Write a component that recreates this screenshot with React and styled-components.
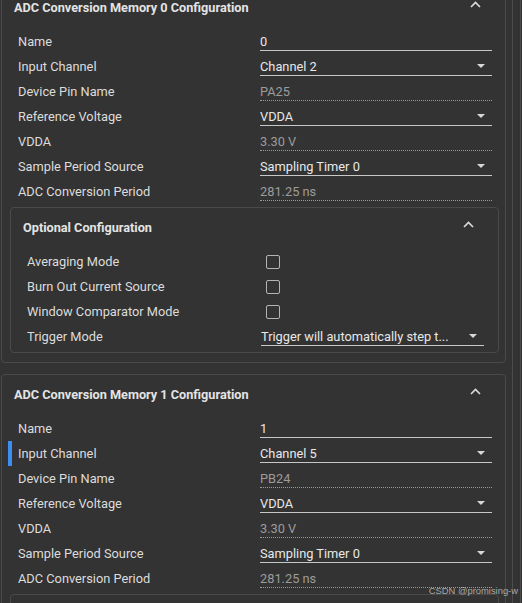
import React from "react";
import styled, { createGlobalStyle } from "styled-components";

const Global = createGlobalStyle`
  html, body { margin: 0; padding: 0; background: #333333; overflow: hidden; }
  body { font-family: Roboto, "Liberation Sans", Arial, sans-serif; }
  * { box-sizing: border-box; }
`;

const Page = styled.div`
  display: flex;
  width: 522px;
  height: 603px;
  position: relative;
  overflow: hidden;
`;

const Main = styled.div`
  width: 512px;
  padding-left: 1px;
  display: flex;
  flex-direction: column;
  gap: 11px;
  margin-top: -13px;
`;

const Rail = styled.div`
  width: 9px;
  height: 100%;
  border-left: 1px solid #4c4c4c;
  border-right: 1px solid #4c4c4c;
`;

const Card = styled.section`
  width: ${(p) => (p.$inner ? "489px" : "505px")};
  border: 1px solid #4a4a4a;
  border-radius: 4px;
  margin: ${(p) => (p.$inner ? "3px 0 9px 8px" : "0")};
  padding-bottom: ${(p) => (p.$inner ? "3px" : "0")};
  flex-shrink: 0;
`;

const Header = styled.div`
  height: 41px;
  display: flex;
  align-items: flex-start;
  justify-content: space-between;
  padding: 12px 24px 0 12px;
`;

const Title = styled.h2`
  margin: 0;
  font-size: 12.7px;
  line-height: 15px;
  font-weight: 700;
  color: #e4e4e4;
`;

const Chevron = styled.svg`
  width: 11px;
  height: 7px;
  margin-top: 1px;
`;

const Row = styled.div`
  position: relative;
  height: 25px;
  display: grid;
  grid-template-columns: 1fr ${(p) => (p.$inner ? "223px" : "232px")};
  align-items: center;
  padding: ${(p) => (p.$inner ? "0 14px 0 16px" : "0 13px 0 16px")};
`;

const Marker = styled.span`
  position: absolute;
  left: 6px;
  top: 0;
  width: 4px;
  height: 25px;
  background: #3d8ef2;
`;

const Label = styled.span`
  font-size: 12.8px;
  line-height: 15px;
  color: #dcdcdc;
  white-space: nowrap;
`;

const Field = styled.div`
  height: 17px;
  margin-top: 1px;
  display: flex;
  align-items: center;
  justify-content: space-between;
  border-bottom: 1px ${(p) => (p.$readonly ? "dotted #9a9a9a" : "solid #c8c8c8")};
  font-size: 12.8px;
  line-height: 15px;
  color: ${(p) => (p.$readonly ? "#9c9c9c" : "#e8e8e8")};
  padding-right: 7px;
  white-space: nowrap;
  overflow: hidden;
`;

const Arrow = styled.span`
  width: 0;
  height: 0;
  border-left: 4px solid transparent;
  border-right: 4px solid transparent;
  border-top: 4px solid #d8d8d8;
  flex-shrink: 0;
  margin-top: -1px;
`;

const Check = styled.span`
  width: 14px;
  height: 14px;
  margin-left: 5px;
  border: 1.5px solid #b4b4b4;
  border-radius: 2px;
`;

const Watermark = styled.div`
  position: absolute;
  right: 4px;
  bottom: 7px;
  font-size: 9.4px;
  color: rgba(210, 210, 210, 0.75);
  font-family: "Liberation Sans", Arial, sans-serif;
`;

const ChevronUp = () => (
  <Chevron viewBox="0 0 11 7">
    <path d="M1 6 L5.5 1.5 L10 6" fill="none" stroke="#dcdcdc" strokeWidth="1.6" />
  </Chevron>
);

const FieldRow = ({ label, value, type, inner, marker }) => (
  <Row $inner={inner}>
    {marker && <Marker />}
    <Label>{label}</Label>
    {type === "check" ? (
      <Check />
    ) : (
      <Field $readonly={type === "ro"}>
        <span>{value}</span>
        {type === "select" && <Arrow />}
      </Field>
    )}
  </Row>
);

const memRows = (n, ch, pin) => [
  { label: "Name", value: String(n), type: "text" },
  { label: "Input Channel", value: ch, type: "select" },
  { label: "Device Pin Name", value: pin, type: "ro" },
  { label: "Reference Voltage", value: "VDDA", type: "select" },
  { label: "VDDA", value: "3.30 V", type: "ro" },
  { label: "Sample Period Source", value: "Sampling Timer 0", type: "select" },
  { label: "ADC Conversion Period", value: "281.25 ns", type: "ro" },
];

const optRows = [
  { label: "Averaging Mode", type: "check" },
  { label: "Burn Out Current Source", type: "check" },
  { label: "Window Comparator Mode", type: "check" },
  { label: "Trigger Mode", value: "Trigger will automatically step t...", type: "select" },
];

const Optional = () => (
  <Card $inner>
    <Header>
      <Title>Optional Configuration</Title>
      <ChevronUp />
    </Header>
    {optRows.map((r) => (
      <FieldRow key={r.label} {...r} inner />
    ))}
  </Card>
);

const Memory = ({ n, ch, pin, markIdx }) => (
  <Card>
    <Header>
      <Title>ADC Conversion Memory {n} Configuration</Title>
      <ChevronUp />
    </Header>
    {memRows(n, ch, pin).map((r, i) => (
      <FieldRow key={r.label} {...r} marker={i === markIdx} />
    ))}
    <Optional />
  </Card>
);

export default function App() {
  return (
    <>
      <Global />
      <Page>
        <Main>
          <Memory n={0} ch="Channel 2" pin="PA25" markIdx={-1} />
          <Memory n={1} ch="Channel 5" pin="PB24" markIdx={1} />
        </Main>
        <Rail />
        <Watermark>CSDN @promising-w</Watermark>
      </Page>
    </>
  );
}
